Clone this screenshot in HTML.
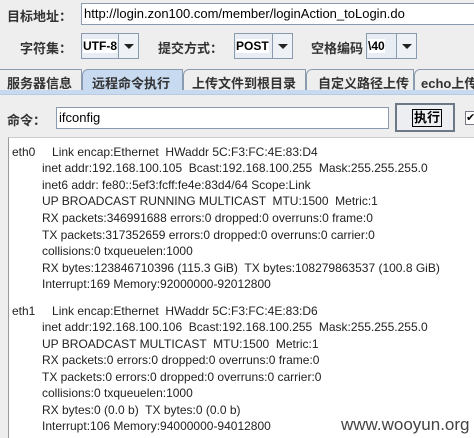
<!DOCTYPE html>
<html><head><meta charset="utf-8"><style>
body{margin:0;width:474px;height:436px;background:#eeeeee;position:relative;overflow:hidden;font-family:"Liberation Sans","Noto Sans CJK SC",sans-serif;}
.a{position:absolute;}
.lb{font-size:13px;font-weight:bold;color:#333;position:absolute;}
.in{position:absolute;background:#fff;border:1px solid #8a9bb0;font-size:13px;color:#000;line-height:19px;padding-left:2px;box-sizing:border-box;}
.cb{position:absolute;background:#e8edf4;border:1px solid #8a9bb0;box-sizing:border-box;font-size:12px;font-weight:bold;}
.cb .t{position:absolute;left:1px;top:5px;background:#fff;}
.cb .ar{position:absolute;right:0;top:0;bottom:0;width:19px;border-left:1px solid #8a9bb0;background:#eef1f6;}
.cb .ar:after{content:"";position:absolute;left:5px;top:10px;border-left:5px solid transparent;border-right:5px solid transparent;border-top:5px solid #222;}
.tab{position:absolute;top:69px;height:21px;border:1px solid #8a9bb0;border-bottom:none;box-sizing:border-box;background:#eeeeee;font-size:13px;font-weight:bold;color:#333;padding:3px 0 0 6px;border-top-left-radius:6px 6px;}
.out{position:absolute;left:8px;top:137px;width:470px;height:300px;background:#fff;border-left:1px solid #999;border-top:1px solid #ccc;font-size:12px;color:#222;}
.out div{position:absolute;white-space:pre;}
</style></head><body>
<div class="lb" style="left:7px;top:6px">目标地址：</div>
<div class="in" style="left:81px;top:3px;width:400px;height:22px">http://login.zon100.com/member/loginAction_toLogin.do</div>

<div class="lb" style="left:20px;top:38px">字符集：</div>
<div class="cb" style="left:81px;top:33px;width:58px;height:26px"><span class="t">UTF-8</span><span class="ar"></span></div>
<div class="lb" style="left:158px;top:38px">提交方式：</div>
<div class="cb" style="left:234px;top:33px;width:59px;height:26px"><span class="t">POST</span><span class="ar"></span></div>
<div class="lb" style="left:311px;top:38px">空格编码</div>
<div class="cb" style="left:366px;top:33px;width:51px;height:26px"><span class="t">\40</span><span class="ar"></span></div>

<div class="tab" style="left:-8px;width:90px;padding-left:14px">服务器信息</div>
<div class="tab" style="left:82px;width:101px;background:#c8daf0;padding-left:9px">远程命令执行</div>
<div class="tab" style="left:183px;width:123px;padding-left:8px">上传文件到根目录</div>
<div class="tab" style="left:306px;width:108px;padding-left:11px">自定义路径上传</div>
<div class="tab" style="left:414px;width:70px;padding-left:6px">echo上传</div>
<div class="a" style="left:0;top:90px;width:474px;height:4px;background:#c8daf0;border-bottom:1px solid #b8cbe2"></div>

<div class="lb" style="left:7px;top:110px">命令：</div>
<div class="in" style="left:56px;top:107px;width:333px;height:22px">ifconfig</div>
<div class="a" style="left:395px;top:103px;width:60px;height:29px;border:2px solid #6d7886;box-sizing:border-box;background:#eceef2"><div style="position:absolute;left:15px;top:4px;border:1px solid #000;font-size:13px;font-weight:bold;padding:0 1px;line-height:16px">执行</div></div>
<div class="a" style="left:465px;top:111px;width:12px;height:12px;border:1px solid #778;background:#fff;font-size:11px;line-height:12px">✔</div>

<div class="out">
<div style="left:3px;top:7px">eth0     Link encap:Ethernet  HWaddr 5C:F3:FC:4E:83:D4</div>
<div style="left:33px;top:23px">inet addr:192.168.100.105  Bcast:192.168.100.255  Mask:255.255.255.0</div>
<div style="left:33px;top:40px">inet6 addr: fe80::5ef3:fcff:fe4e:83d4/64 Scope:Link</div>
<div style="left:33px;top:56px">UP BROADCAST RUNNING MULTICAST  MTU:1500  Metric:1</div>
<div style="left:33px;top:73px">RX packets:346991688 errors:0 dropped:0 overruns:0 frame:0</div>
<div style="left:33px;top:90px">TX packets:317352659 errors:0 dropped:0 overruns:0 carrier:0</div>
<div style="left:33px;top:106px">collisions:0 txqueuelen:1000</div>
<div style="left:33px;top:123px">RX bytes:123846710396 (115.3 GiB)  TX bytes:108279863537 (100.8 GiB)</div>
<div style="left:33px;top:139px">Interrupt:169 Memory:92000000-92012800</div>
<div style="left:3px;top:166px">eth1     Link encap:Ethernet  HWaddr 5C:F3:FC:4E:83:D6</div>
<div style="left:33px;top:182px">inet addr:192.168.100.106  Bcast:192.168.100.255  Mask:255.255.255.0</div>
<div style="left:33px;top:199px">UP BROADCAST MULTICAST  MTU:1500  Metric:1</div>
<div style="left:33px;top:215px">RX packets:0 errors:0 dropped:0 overruns:0 frame:0</div>
<div style="left:33px;top:232px">TX packets:0 errors:0 dropped:0 overruns:0 carrier:0</div>
<div style="left:33px;top:248px">collisions:0 txqueuelen:1000</div>
<div style="left:33px;top:265px">RX bytes:0 (0.0 b)  TX bytes:0 (0.0 b)</div>
<div style="left:33px;top:281px">Interrupt:106 Memory:94000000-94012800</div>
<div style="left:332px;top:277px;font-size:17px;color:#444">www.wooyun.org</div>
</div>
</body></html>
